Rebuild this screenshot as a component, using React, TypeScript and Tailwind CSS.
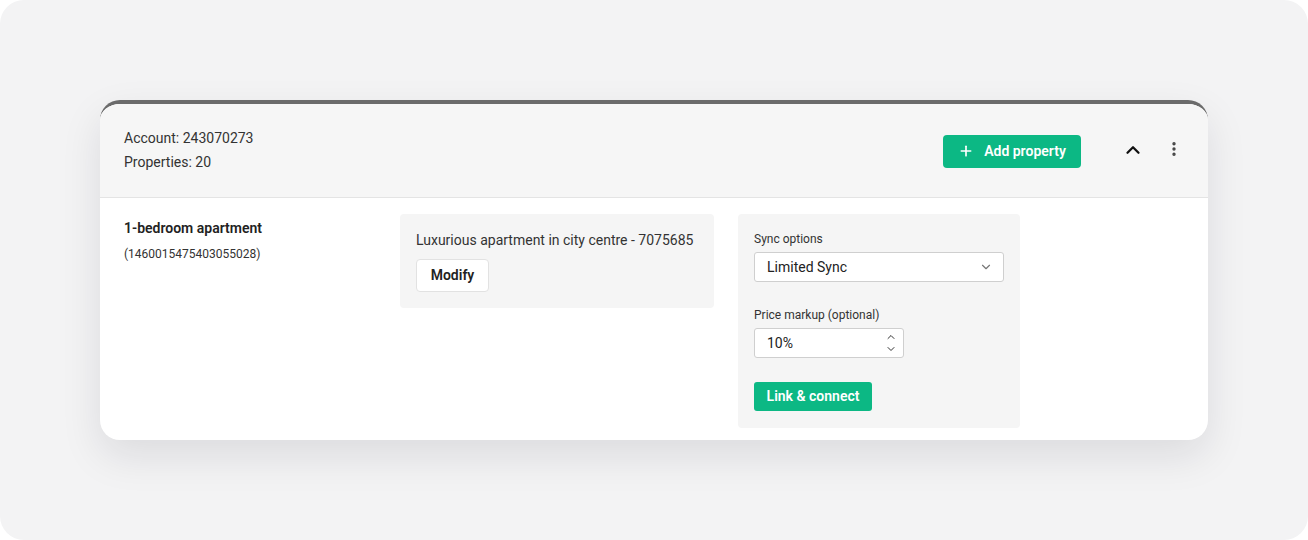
import { ChevronDown, ChevronUp, EllipsisVertical, Plus } from "lucide-react";

export default function App() {
  return (
    <div
      className="w-[1308px] h-[540px] bg-white"
      style={{ fontFamily: "Roboto, 'Liberation Sans', sans-serif" }}
    >
      <div className="w-full h-full rounded-[24px] bg-[#f3f3f4] pt-[100px] px-[100px]">
        {/* Account card */}
        <div className="w-[1108px] h-[340px] rounded-[20px] border-t-4 border-[#6b6b6b] bg-white shadow-[0_16px_40px_rgba(20,20,40,0.10)] overflow-hidden">
          {/* Header */}
          <div className="h-[94px] bg-[#f6f6f6] border-b border-[#e4e4e4] pl-6 pr-[25px] flex items-center">
            <div className="flex-1 text-[14px] leading-6 text-[#333] mt-[-2px]">
              <div>Account: 243070273</div>
              <div>Properties: 20</div>
            </div>
            <button className="h-[33px] w-[138px] rounded-[4px] bg-[#0cb884] text-white text-[14px] font-semibold flex items-center justify-center gap-[10px] mt-[1px]">
              <Plus size={16} strokeWidth={2.5} />
              Add property
            </button>
            <button className="ml-[41px] mt-[-2px] text-[#111]">
              <ChevronUp size={22} strokeWidth={2.5} />
            </button>
            <button className="ml-[21px] mt-[-4px] text-[#444]">
              <EllipsisVertical size={18} strokeWidth={2.5} />
            </button>
          </div>

          {/* Body */}
          <div className="pt-4 pl-6 flex">
            <div className="w-[276px] pt-1">
              <div className="text-[14px] leading-5 font-semibold text-[#222]">
                1-bedroom apartment
              </div>
              <div className="text-[12px] leading-5 text-[#333] mt-[6px]">
                (1460015475403055028)
              </div>
            </div>

            <div className="w-[314px] self-start rounded-[4px] bg-[#f5f5f5] px-4 pt-4 pb-4">
              <div className="text-[14px] leading-5 text-[#333]">
                Luxurious apartment in city centre - 7075685
              </div>
              <button className="mt-[9px] h-[33px] w-[73px] rounded-[4px] border border-[#e2e2e2] bg-white text-[14px] font-semibold text-[#222]">
                Modify
              </button>
            </div>

            <div className="ml-6 w-[282px] rounded-[4px] bg-[#f5f5f5] px-4 pt-4 pb-[17px]">
              <div className="text-[12px] leading-[18px] text-[#333]">Sync options</div>
              <div className="mt-1 h-[30px] w-[250px] rounded-[3px] border border-[#cfcfcf] bg-white pl-3 pr-[10px] flex items-center justify-between">
                <span className="text-[14px] text-[#222]">Limited Sync</span>
                <ChevronDown size={14} strokeWidth={2} className="text-[#777]" />
              </div>

              <div className="mt-6 text-[12px] leading-[18px] text-[#333]">
                Price markup (optional)
              </div>
              <div className="mt-1 h-[30px] w-[150px] rounded-[3px] border border-[#cfcfcf] bg-white pl-3 pr-[6px] flex items-center justify-between">
                <span className="text-[14px] text-[#222]">10%</span>
                <span className="flex flex-col items-center text-[#333] leading-none">
                  <ChevronUp size={12} strokeWidth={2} />
                  <ChevronDown size={12} strokeWidth={2} />
                </span>
              </div>

              <button className="mt-6 h-[29px] w-[118px] rounded-[3px] bg-[#0cb884] text-white text-[14px] font-semibold">
                Link &amp; connect
              </button>
            </div>
          </div>
        </div>
      </div>
    </div>
  );
}
